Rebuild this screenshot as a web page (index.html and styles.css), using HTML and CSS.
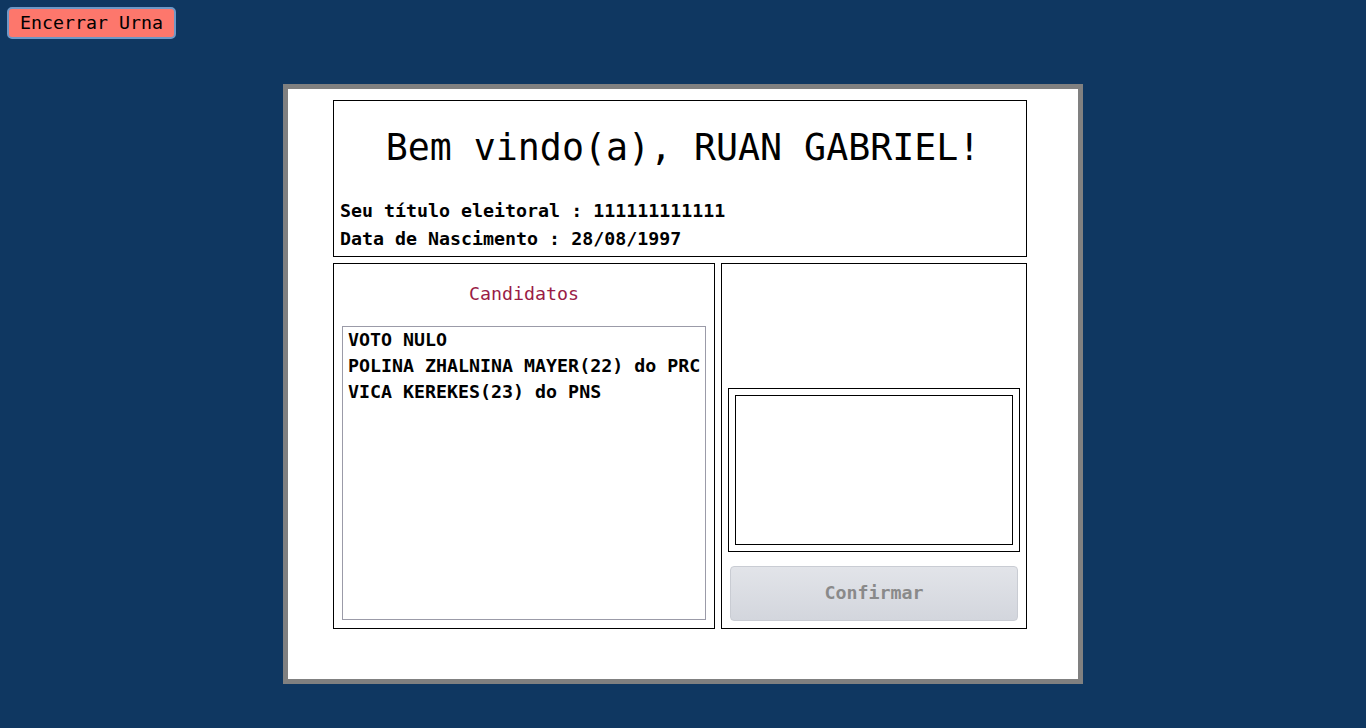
FILE: index.html
```html
<!DOCTYPE html>
<html lang="pt-BR">
<head>
<meta charset="utf-8">
<title>Urna</title>
<link rel="stylesheet" href="styles.css">
</head>
<body>
<div class="topbar">
  <button class="btn-encerrar" type="button">Encerrar Urna</button>
</div>
<main class="urna">
  <section class="eleitor">
    <h1 class="boas-vindas">Bem vindo(a), RUAN GABRIEL!</h1>
    <p class="info">Seu título eleitoral : 111111111111</p>
    <p class="info">Data de Nascimento : 28/08/1997</p>
  </section>
  <div class="painel">
    <section class="candidatos">
      <h2 class="candidatos-titulo">Candidatos</h2>
      <div class="lista">
        <div class="opcao">VOTO NULO</div>
        <div class="opcao">POLINA ZHALNINA MAYER(22) do PRC</div>
        <div class="opcao">VICA KEREKES(23) do PNS</div>
      </div>
    </section>
    <section class="voto">
      <div class="voto-espaco"></div>
      <div class="moldura">
        <div class="moldura-interna"></div>
      </div>
      <button class="btn-confirmar" type="button" disabled>Confirmar</button>
    </section>
  </div>
</main>
</body>
</html>
```
FILE: styles.css
```css
html, body {
  margin: 0;
  padding: 0;
}
body {
  background: #0f3761;
  font-family: "DejaVu Sans Mono", "Liberation Mono", monospace;
  color: #000;
  width: 1366px;
  height: 728px;
  overflow: hidden;
}
.topbar {
  padding: 7px 0 0 7px;
  height: 32px;
}
.btn-encerrar {
  box-sizing: border-box;
  height: 32px;
  width: 169px;
  padding: 0;
  font-family: "DejaVu Sans Mono", monospace;
  font-size: 18.3px;
  color: #000;
  background: #fd776c;
  border: 2px solid #6e98c6;
  border-radius: 5px;
  line-height: 26px;
}
.urna {
  box-sizing: border-box;
  width: 800px;
  height: 600px;
  margin: 45px auto 0;
  border: 5px solid #808080;
  background: #fff;
  padding: 11px 51px 0 45px;
}
.eleitor {
  box-sizing: border-box;
  height: 157px;
  border: 1px solid #000;
  padding: 26px 0 0 6px;
}
.boas-vindas {
  margin: 0 0 28px;
  font-size: 36.6px;
  font-weight: normal;
  line-height: 42px;
  text-align: center;
}
.info {
  margin: 0;
  font-size: 18.3px;
  font-weight: bold;
  line-height: 28px;
}
.painel {
  display: flex;
  gap: 6px;
  margin-top: 6px;
  height: 366px;
}
.candidatos {
  box-sizing: border-box;
  width: 382px;
  border: 1px solid #000;
  padding: 19px 8px 8px;
  display: flex;
  flex-direction: column;
}
.candidatos-titulo {
  margin: 0 0 21px;
  font-size: 18.3px;
  font-weight: normal;
  line-height: 22px;
  color: #9a1c46;
  text-align: center;
}
.lista {
  flex: 1;
  border: 1px solid #9b9ba8;
  padding: 0 0 0 5px;
}
.opcao {
  font-size: 18.3px;
  font-weight: bold;
  line-height: 26px;
  white-space: nowrap;
}
.voto {
  box-sizing: border-box;
  width: 306px;
  border: 1px solid #000;
  padding: 0 6px 7px;
  display: flex;
  flex-direction: column;
}
.voto-espaco {
  flex: 1;
}
.moldura {
  box-sizing: border-box;
  height: 164px;
  border: 1px solid #000;
  padding: 6px;
  margin-bottom: 14px;
}
.moldura-interna {
  box-sizing: border-box;
  height: 100%;
  border: 1px solid #000;
}
.btn-confirmar {
  box-sizing: border-box;
  height: 55px;
  width: 288px;
  margin-left: 2px;
  font-family: "DejaVu Sans Mono", monospace;
  font-size: 18.3px;
  font-weight: bold;
  color: #8a8a8a;
  background: linear-gradient(#e2e4e9, #d3d6dd);
  border: 1px solid #c9ccd3;
  border-radius: 4px;
  padding: 0 0 2px;
}
```
